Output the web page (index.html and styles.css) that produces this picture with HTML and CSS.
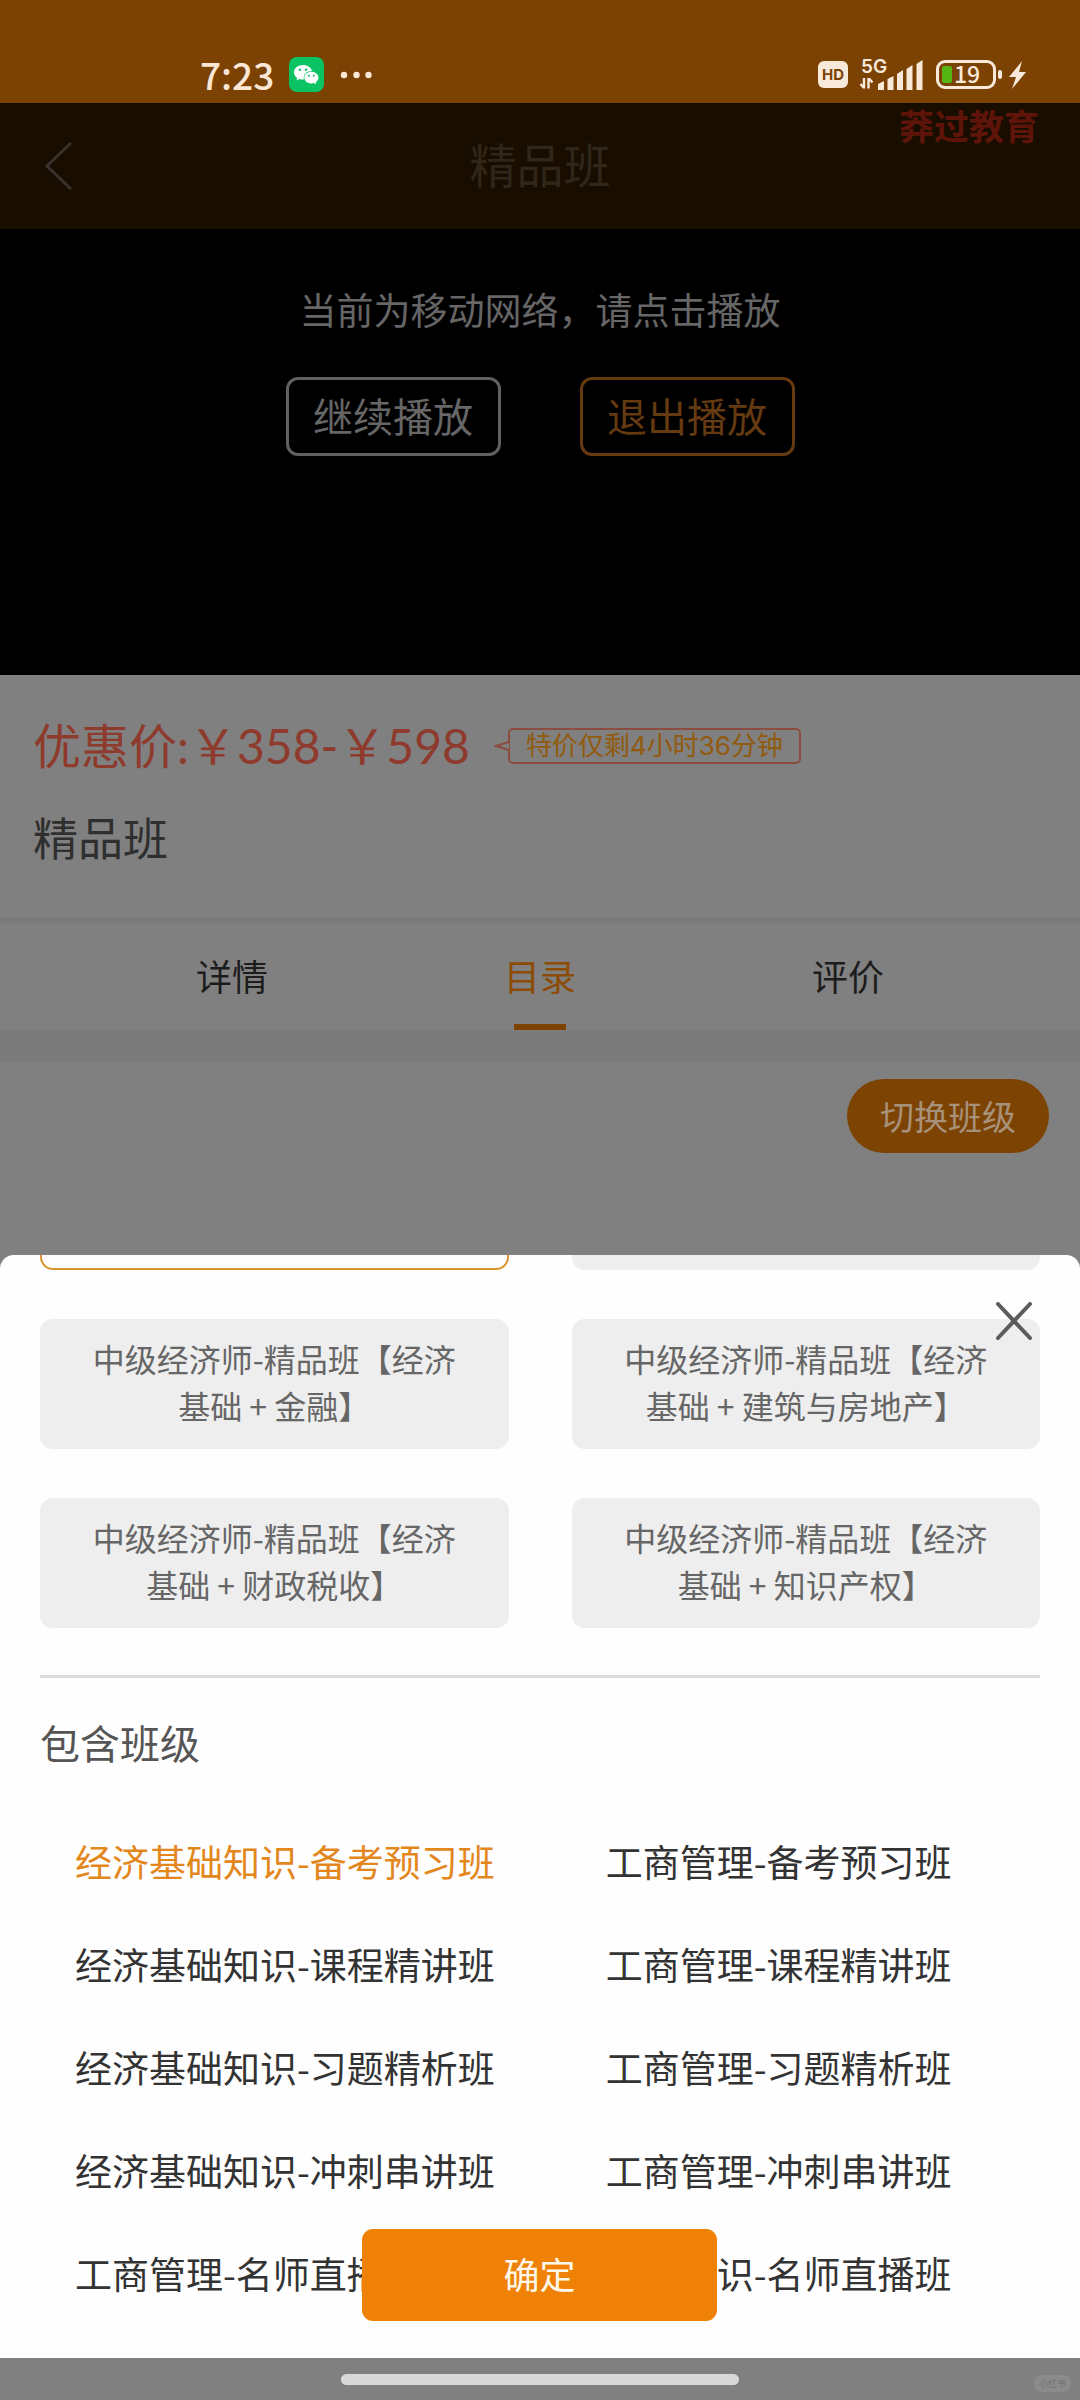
FILE: index.html
```html
<!DOCTYPE html>
<html lang="zh-CN">
<head>
<meta charset="utf-8">
<meta name="viewport" content="width=device-width, initial-scale=1">
<title>精品班</title>
<link rel="stylesheet" href="styles.css">
</head>
<body>
<div class="status">
  <div class="status-left">
    <span class="time">7:23</span>
    <svg class="wechat" viewBox="0 0 35 35" width="35" height="35" aria-hidden="true">
      <rect width="35" height="35" rx="8" fill="#0ac463"/>
      <path d="M14 8c-5 0-9 3.200-9 7.300 0 2.300 1.200 4.200 3.200 5.600l-.8 2.600 3-1.500c1.200.4 2.400.6 3.600.6l1-.1c-.2-.6-.3-1.200-.3-1.900 0-3.800 3.500-6.700 7.700-6.700h.6C22.200 10.500 18.400 8 14 8z" fill="#fff"/>
      <path d="M22.400 14.700c-4 0-7.100 2.600-7.100 5.900s3.100 5.900 7.100 5.900c.9 0 1.800-.1 2.600-.4l2.300 1.200-.6-2c1.700-1.100 2.700-2.800 2.700-4.700 0-3.300-3.100-5.900-7-5.900z" fill="#fff"/>
      <circle cx="10.800" cy="12.800" r="1.200" fill="#0ac463"/><circle cx="17" cy="12.800" r="1.200" fill="#0ac463"/>
      <circle cx="20" cy="18.800" r="1" fill="#0ac463"/><circle cx="24.800" cy="18.800" r="1" fill="#0ac463"/>
    </svg>
    <svg viewBox="0 0 34 8" width="34" height="8" fill="#fbe7d6" aria-hidden="true"><circle cx="5" cy="4" r="3.200"/><circle cx="17.500" cy="4" r="3.200"/><circle cx="29.500" cy="4" r="3.200"/></svg>
  </div>
  <svg class="status-right" viewBox="0 -6 210 40" width="210" height="40" role="img" aria-label="5G 19%">
    <rect x="0" y="4" width="30" height="27" rx="6" fill="#f8e9db"/>
    <text class="hd" x="15" y="23" text-anchor="middle">HD</text>
    <text class="net" x="43" y="16">5G</text>
    <path d="M46 21v10.500M46 31l-3.500-4M50.500 31.500V21M51 21.500l3.500 4" stroke="#f8e9db" stroke-width="2.400" fill="none"/>
    <g fill="#f8e9db">
      <path d="M60 33v-6l6-3v9zM69.500 33V22l6-3v14zM79 33V17l6-4v20zM88.500 33V12l6-4v25zM98.500 33V7l6-4v30z"/>
      <rect x="180" y="13" width="4" height="9" rx="2"/>
      <path d="M204 4l-13 16h7l-4 12 14-17h-7z"/>
    </g>
    <rect x="119.500" y="4.500" width="57" height="26" rx="7.500" fill="none" stroke="#f8e9db" stroke-width="3"/>
    <rect x="124" y="9" width="10" height="17" rx="2" fill="#55b512"/>
    <text class="level" x="136" y="26">19</text>
  </svg>
</div>

<header class="header">
  <button class="back" type="button" aria-label="返回">
    <svg viewBox="0 0 28 48" width="28" height="48" aria-hidden="true"><path d="M26 1 2 24l24 23" fill="none" stroke="#37322b" stroke-width="3"/></svg>
  </button>
  <h1>精品班</h1>
  <span class="brand">莽过教育</span>
</header>

<section class="video">
  <p>当前为移动网络，请点击播放</p>
  <div class="video-actions">
    <button type="button">继续播放</button>
    <button type="button" class="exit">退出播放</button>
  </div>
</section>

<section class="info">
  <div class="price-row">
    <span class="price">优惠价:￥358-￥598</span>
    <span class="deal"><svg viewBox="0 0 16 18" width="16" height="18" aria-hidden="true"><path d="M15 0v5L2 9l13 4v5" fill="#808080" stroke="#8a4d40" stroke-width="2"/></svg>特价仅剩4小时36分钟</span>
  </div>
  <h2>精品班</h2>
</section>

<nav class="tabs">
  <a href="#detail">详情</a>
  <a href="#catalog" class="active" aria-current="page">目录</a>
  <a href="#review">评价</a>
</nav>

<main class="catalog">
  <button type="button" class="switch">切换班级</button>
</main>

<section class="sheet" role="dialog" aria-label="切换班级">
  <div class="packages">
    <button type="button" class="selected" aria-label="套餐一"></button>
    <button type="button" aria-label="套餐二"></button>
    <button type="button">中级经济师-精品班【经济基础 + 金融】</button>
    <button type="button">中级经济师-精品班【经济基础 + 建筑与房地产】</button>
    <button type="button">中级经济师-精品班【经济基础 + 财政税收】</button>
    <button type="button">中级经济师-精品班【经济基础 + 知识产权】</button>
  </div>
  <hr>
  <h3>包含班级</h3>
  <div class="classes">
    <button type="button" class="selected">经济基础知识-备考预习班</button>
    <button type="button">工商管理-备考预习班</button>
    <button type="button">经济基础知识-课程精讲班</button>
    <button type="button">工商管理-课程精讲班</button>
    <button type="button">经济基础知识-习题精析班</button>
    <button type="button">工商管理-习题精析班</button>
    <button type="button">经济基础知识-冲刺串讲班</button>
    <button type="button">工商管理-冲刺串讲班</button>
    <button type="button">工商管理-名师直播班</button>
    <button type="button">基础知识-名师直播班</button>
  </div>
  <button type="button" class="close" aria-label="关闭">
    <svg viewBox="0 0 36 38" width="36" height="38" aria-hidden="true"><path d="M2 2l32 34M34 2 2 36" stroke="#5c5c5c" stroke-width="4" stroke-linecap="round"/></svg>
  </button>
  <button type="button" class="confirm">确定</button>
</section>

<footer class="gesture">
  <span class="home-bar"></span>
  <span class="tag">小红书</span>
</footer>
</body>
</html>
```

FILE: styles.css
```css
* { box-sizing: border-box; }

body {
  margin: 0;
  min-height: 100vh;
  display: flex;
  flex-direction: column;
  background: #808080;
  color: #333;
  font-family: "Noto Sans CJK SC", sans-serif;
  font-weight: 400;
  text-spacing-trim: space-all;
}

h1, h2, h3, p { margin: 0; font-weight: 400; }

button {
  margin: 0;
  padding: 0;
  border: 0;
  background: none;
  color: inherit;
  font: inherit;
  cursor: pointer;
}

svg { display: block; }

/* Status bar */
.status {
  display: flex;
  justify-content: space-between;
  align-items: flex-end;
  height: 103px;
  padding: 0 52px 11px 200px;
  background: #7b4203;
  color: #fbe7d6;
}
.status-left { display: flex; align-items: center; gap: 15px; height: 35px; }
.time { font-size: 37px; line-height: 35px; font-weight: 500; }
.status-right { margin-bottom: 1px; }
.hd { font: 700 15px "Inter", sans-serif; fill: #7b4203; }
.net { font: 600 19px "Inter", sans-serif; fill: #f8e9db; }
.level { font: 500 23px "Noto Sans CJK SC", sans-serif; fill: #f8e9db; }

/* Title bar */
.header {
  position: relative;
  display: flex;
  align-items: center;
  justify-content: center;
  height: 126px;
  padding-bottom: 6px;
  background: #190d00;
  color: #302619;
}
.header h1 { font-size: 47px; line-height: 60px; }
.back { position: absolute; left: 45px; top: 39px; }
.brand {
  position: absolute;
  right: 41px;
  top: 4px;
  color: #5e1408;
  font-size: 35px;
  line-height: 36px;
  font-weight: 700;
}

/* Video area */
.video {
  height: 446px;
  padding-top: 56px;
  background: #000;
  color: #666;
  text-align: center;
}
.video p { font-size: 37px; line-height: 48px; }
.video-actions { display: flex; justify-content: center; gap: 79px; margin-top: 44px; }
.video-actions button {
  width: 215px;
  height: 79px;
  padding-bottom: 4px;
  border: 3px solid #606060;
  border-radius: 12px;
  font-size: 40px;
  line-height: 60px;
}
.video-actions .exit { border-color: #653a10; color: #653a10; }

/* Price and name */
.info { height: 249px; padding: 41px 33px 0; border-bottom: 7px solid #7b7b7b; }
.price-row { display: flex; align-items: center; gap: 38px; }
.price {
  color: #8e3a2d;
  font-family: "Lato", "Noto Sans CJK SC", sans-serif;
  font-size: 48px;
  line-height: 60px;
}
.deal {
  position: relative;
  padding: 0 16px;
  border: 2px solid #8a4d40;
  border-radius: 5px;
  color: #925a0c;
  font-family: "Inter", "Noto Sans CJK SC", sans-serif;
  font-size: 26px;
  line-height: 32px;
}
.deal svg { position: absolute; left: -16px; top: 7px; }
.info h2 { margin-top: 31px; color: #2f2f2f; font-size: 45px; line-height: 60px; }

/* Tabs */
.tabs {
  display: flex;
  height: 138px;
  padding: 0 78px;
  border-bottom: 32px solid #7b7b7b;
  font-size: 36px;
  line-height: 103px;
}
.tabs a { position: relative; flex: 1; color: #1c1c1c; text-align: center; text-decoration: none; }
.tabs .active { color: #8c4c05; }
.tabs .active::after {
  content: "";
  position: absolute;
  left: calc(50% - 26px);
  bottom: 0;
  width: 52px;
  height: 6px;
  background: #7d4303;
}

.catalog { display: flex; flex: 1; align-items: flex-start; justify-content: flex-end; padding: 17px 31px; }
.switch {
  padding: 0 33px;
  border-radius: 37px;
  background: #7d4303;
  color: #a8917a;
  font-size: 34px;
  line-height: 74px;
}

/* Bottom sheet, its list scrolled past the first row of packages */
.sheet {
  position: relative;
  overflow: hidden;
  padding: 0 40px 33px;
  border-radius: 14px 14px 0 0;
  background: #fefefe;
}
.packages {
  display: grid;
  grid-template-columns: 1fr 1fr;
  gap: 49px 63px;
  margin-top: -115px;
}
.packages button {
  min-height: 130px;
  padding: 14px 40px 18px;
  border: 2px solid #eee;
  border-radius: 13px;
  background: #eee;
  color: #666;
  font-size: 32px;
  line-height: 47px;
}
.packages .selected { border-color: #d8962e; background: #fefefe; }
.sheet hr { height: 3px; margin: 47px 0 34px; border: 0; background: #dcdcdc; }
.sheet h3 { color: #555; font-size: 40px; line-height: 60px; }
.classes {
  display: grid;
  grid-template-columns: 55fr 45fr;
  margin-top: 38px;
  padding-left: 35px;
}
.classes button {
  color: #333;
  font-size: 37px;
  line-height: 103px;
  text-align: left;
  white-space: nowrap;
}
.classes .selected { color: #e3871c; }
.close { position: absolute; right: 48px; top: 47px; }
.confirm {
  position: absolute;
  left: 50%;
  bottom: 37px;
  width: 355px;
  height: 92px;
  margin-left: -178px;
  padding-bottom: 4px;
  border-radius: 11px;
  background: #ef8206;
  color: #fff8ea;
  font-size: 36px;
}

/* Gesture bar */
.gesture { position: relative; display: flex; justify-content: center; height: 42px; padding-top: 16px; }
.home-bar { width: 398px; height: 11px; border-radius: 6px; background: #d9d9d9; }
.tag {
  position: absolute;
  right: 9px;
  top: 17px;
  padding: 0 5px;
  border-radius: 8px;
  background: #8b8b8b;
  color: #747474;
  font-size: 9px;
  line-height: 17px;
}
```
